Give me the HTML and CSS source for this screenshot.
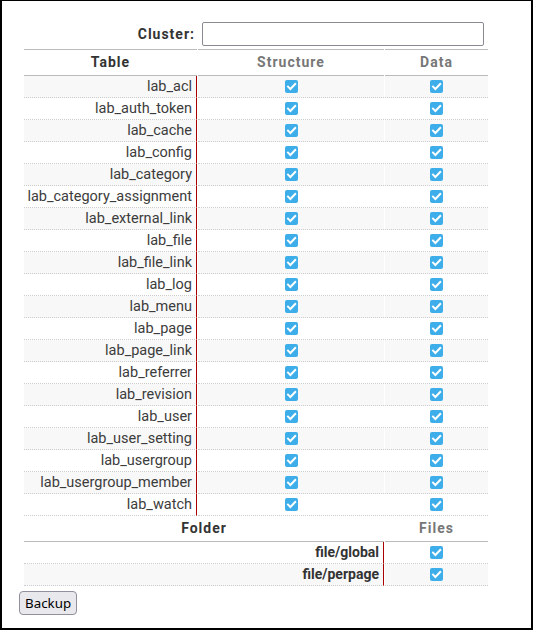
FILE: index.html
```html
<!DOCTYPE html>
<html>
<head>
<meta charset="utf-8">
<link rel="stylesheet" href="styles.css">
</head>
<body>
<div class="frame">
  <table class="grid">
    <colgroup>
      <col class="c1"><col class="c2"><col class="c3">
    </colgroup>
    <tr class="cluster">
      <td class="label">Cluster:</td>
      <td colspan="2" class="inp"><input type="text" class="field"></td>
    </tr>
    <tr class="head">
      <th class="dark">Table</th>
      <th class="muted">Structure</th>
      <th class="muted">Data</th>
    </tr>
    <tr class="alt"><td class="name">lab_acl</td><td class="chk"><input type="checkbox" checked></td><td class="chk"><input type="checkbox" checked></td></tr>
    <tr><td class="name">lab_auth_token</td><td class="chk"><input type="checkbox" checked></td><td class="chk"><input type="checkbox" checked></td></tr>
    <tr class="alt"><td class="name">lab_cache</td><td class="chk"><input type="checkbox" checked></td><td class="chk"><input type="checkbox" checked></td></tr>
    <tr><td class="name">lab_config</td><td class="chk"><input type="checkbox" checked></td><td class="chk"><input type="checkbox" checked></td></tr>
    <tr class="alt"><td class="name">lab_category</td><td class="chk"><input type="checkbox" checked></td><td class="chk"><input type="checkbox" checked></td></tr>
    <tr><td class="name">lab_category_assignment</td><td class="chk"><input type="checkbox" checked></td><td class="chk"><input type="checkbox" checked></td></tr>
    <tr class="alt"><td class="name">lab_external_link</td><td class="chk"><input type="checkbox" checked></td><td class="chk"><input type="checkbox" checked></td></tr>
    <tr><td class="name">lab_file</td><td class="chk"><input type="checkbox" checked></td><td class="chk"><input type="checkbox" checked></td></tr>
    <tr class="alt"><td class="name">lab_file_link</td><td class="chk"><input type="checkbox" checked></td><td class="chk"><input type="checkbox" checked></td></tr>
    <tr><td class="name">lab_log</td><td class="chk"><input type="checkbox" checked></td><td class="chk"><input type="checkbox" checked></td></tr>
    <tr class="alt"><td class="name">lab_menu</td><td class="chk"><input type="checkbox" checked></td><td class="chk"><input type="checkbox" checked></td></tr>
    <tr><td class="name">lab_page</td><td class="chk"><input type="checkbox" checked></td><td class="chk"><input type="checkbox" checked></td></tr>
    <tr class="alt"><td class="name">lab_page_link</td><td class="chk"><input type="checkbox" checked></td><td class="chk"><input type="checkbox" checked></td></tr>
    <tr><td class="name">lab_referrer</td><td class="chk"><input type="checkbox" checked></td><td class="chk"><input type="checkbox" checked></td></tr>
    <tr class="alt"><td class="name">lab_revision</td><td class="chk"><input type="checkbox" checked></td><td class="chk"><input type="checkbox" checked></td></tr>
    <tr><td class="name">lab_user</td><td class="chk"><input type="checkbox" checked></td><td class="chk"><input type="checkbox" checked></td></tr>
    <tr class="alt"><td class="name">lab_user_setting</td><td class="chk"><input type="checkbox" checked></td><td class="chk"><input type="checkbox" checked></td></tr>
    <tr><td class="name">lab_usergroup</td><td class="chk"><input type="checkbox" checked></td><td class="chk"><input type="checkbox" checked></td></tr>
    <tr class="alt"><td class="name">lab_usergroup_member</td><td class="chk"><input type="checkbox" checked></td><td class="chk"><input type="checkbox" checked></td></tr>
    <tr><td class="name">lab_watch</td><td class="chk"><input type="checkbox" checked></td><td class="chk"><input type="checkbox" checked></td></tr>
    <tr class="head folderhead">
      <th colspan="2" class="dark">Folder</th>
      <th class="muted">Files</th>
    </tr>
    <tr><td colspan="2" class="name bold">file/global</td><td class="chk"><input type="checkbox" checked></td></tr>
    <tr class="alt"><td colspan="2" class="name bold">file/perpage</td><td class="chk"><input type="checkbox" checked></td></tr>
  </table>
  <button class="btn" type="button">Backup</button>
</div>
</body>
</html>
```

FILE: styles.css
```css
html, body {
  margin: 0;
  padding: 0;
  background: #fff;
}
.frame {
  box-sizing: border-box;
  width: 533px;
  height: 630px;
  border-style: solid;
  border-color: #000;
  border-width: 1px 2px 2px 2px;
  padding: 18px 0 0 0;
  font-family: Roboto, "Liberation Sans", sans-serif;
  font-size: 14px;
  color: #3c3c3c;
}
.grid {
  border-collapse: separate;
  border-spacing: 1px 0;
  table-layout: fixed;
  width: 466px;
  margin-left: 21px;
}
.c1 { width: 173px; }
.c2 { width: 186px; }
.c3 { width: 103px; }
.grid td, .grid th {
  padding: 0;
  line-height: 21px;
}
.cluster td {
  height: 30px;
  line-height: 30px;
}
.label {
  text-align: right;
  font-weight: bold;
  letter-spacing: 1px;
  color: #333;
  padding-right: 2px !important;
}
.field {
  display: block;
  box-sizing: border-box;
  width: 282px;
  height: 24px;
  margin: 3px 0 3px 4px;
  border: 1px solid #8a8a94;
  border-radius: 2px;
  background: #fff;
  padding: 0 4px;
}
.head th {
  line-height: 25px;
  border-top: 1px solid #bbb;
  border-bottom: 1px solid #bbb;
  font-weight: bold;
  letter-spacing: 1px;
  text-align: center;
}
.folderhead th {
  border-top: none;
}
.dark { color: #333; }
.muted { color: #777; }
.grid tr.alt td {
  background: #f8f8f8;
}
.grid td.name, .grid td.chk {
  border-bottom: 1px dotted #ccc;
}
.name {
  text-align: right;
  font-size: 14.5px;
  padding-right: 4px !important;
  border-right: 1px solid #a80000;
  white-space: nowrap;
}
.name.bold {
  font-size: 14px;
  font-weight: bold;
  color: #333;
}
.chk {
  text-align: center;
}
.chk input {
  -webkit-appearance: none;
  appearance: none;
  display: inline-block;
  box-sizing: border-box;
  width: 13px;
  height: 13px;
  margin: 0;
  border: none;
  border-radius: 2px;
  background-color: #3daee9;
  background-image: url("data:image/svg+xml;utf8,<svg xmlns='http://www.w3.org/2000/svg' viewBox='0 0 13 13'><path d='M3 6.6 L5.4 9 L10.2 4' fill='none' stroke='white' stroke-width='2' stroke-linecap='square'/></svg>");
  background-repeat: no-repeat;
  background-size: 13px 13px;
  vertical-align: middle;
  position: relative;
  top: -1px;
}
.btn {
  display: block;
  margin: 5px 0 0 17px;
  height: 24px;
  box-sizing: border-box;
  padding: 0 5px;
  font-family: "Noto Sans", "DejaVu Sans", sans-serif;
  font-size: 13.33px;
  color: #000;
  background: #e9e9ed;
  border: 1px solid #8f8f9d;
  border-radius: 4px;
}
```
